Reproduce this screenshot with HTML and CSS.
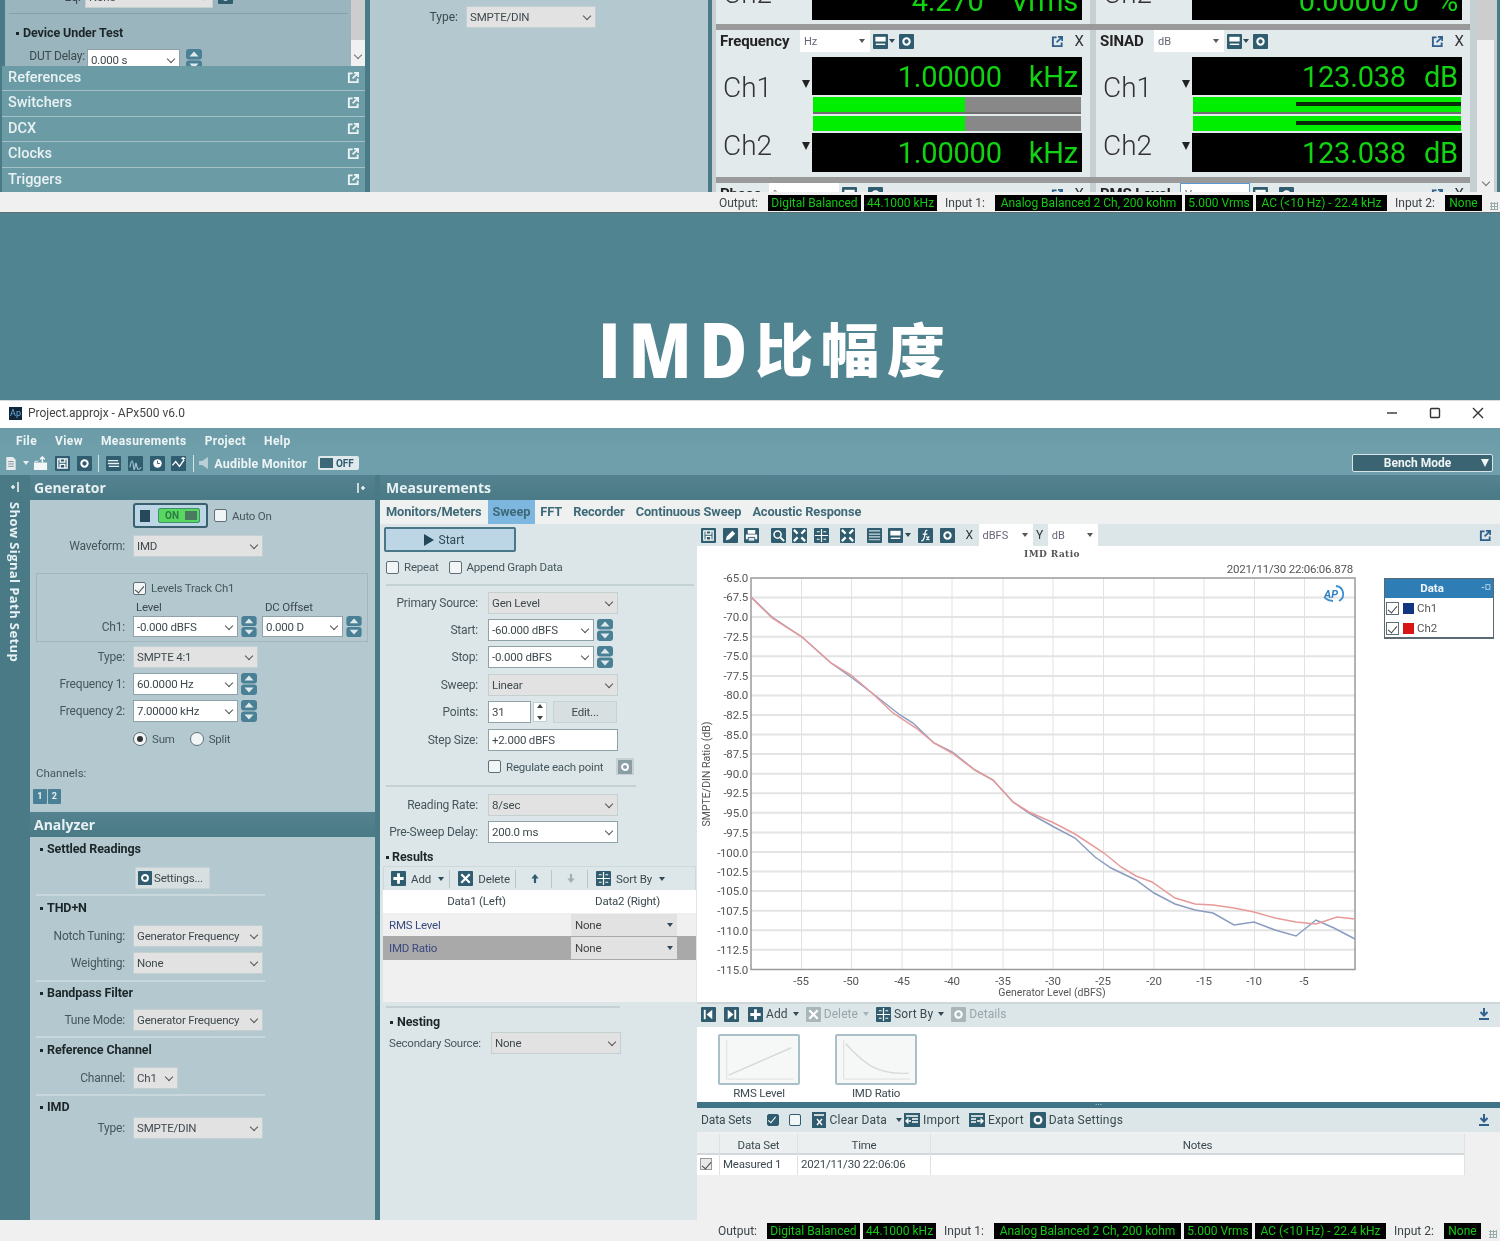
FILE: index.html
```html
<!DOCTYPE html>
<html lang="en">
<head>
    <meta charset="UTF-8">
    <meta name="viewport" content="width=device-width, initial-scale=1.0">
    <title>APx500 IMD Ratio</title>
    <link rel="stylesheet" href="styles.css">
</head>
<body>
    <!-- shared icons -->
    <svg class="sprite" xmlns="http://www.w3.org/2000/svg">
        <symbol id="i-save" viewBox="0 0 16 16"><rect width="16" height="16" rx="1" fill="currentColor"/><path d="M3 3h10v10H3zM5.500 3v3.500h5V3M5.500 13V9h5v4" fill="none" stroke="#fff" stroke-width="1.400"/></symbol>
        <symbol id="i-gear" viewBox="0 0 16 16"><rect width="16" height="16" rx="1" fill="currentColor"/><circle cx="8" cy="8" r="3.400" fill="none" stroke="#fff" stroke-width="2.200"/></symbol>
        <symbol id="i-plus" viewBox="0 0 16 16"><rect width="16" height="16" rx="1" fill="currentColor"/><path d="M8 2.500v11M2.500 8h11" stroke="#fff" stroke-width="3"/></symbol>
        <symbol id="i-x" viewBox="0 0 16 16"><rect width="16" height="16" rx="1" fill="currentColor"/><path d="M3.500 3.500l9 9M12.500 3.500l-9 9" stroke="#fff" stroke-width="2.400"/></symbol>
        <symbol id="i-sort" viewBox="0 0 16 16"><rect width="16" height="16" rx="1" fill="currentColor"/><path d="M8 1v14M1 8h14M3 4h3M10 4h3M3 12h3M10 12h3" stroke="#fff" stroke-width="1.300"/></symbol>
        <symbol id="i-pop" viewBox="0 0 14 14"><path d="M6 2.500H2v9.500h9.500V8" fill="none" stroke="currentColor" stroke-width="2"/><path d="M6 8l5-5M7.500 2h4.500v4.500" fill="none" stroke="currentColor" stroke-width="1.800"/></symbol>
        <symbol id="i-spin" viewBox="0 0 16 22"><rect width="16" height="10.500" y="0" rx="3" fill="#4a8095"/><rect width="16" height="10.500" y="11.500" rx="3" fill="#4a8095"/><path d="M8 2.500l4.500 5h-9zM8 19.500l-4.500-5h9z" fill="#dfe9ec"/></symbol>
        <symbol id="i-open" viewBox="0 0 16 16"><path d="M1 7h14v8H1zM1 7l2-2h4" fill="#f2f6f7"/><path d="M10 1v6M7.500 3.500L10 1l2.500 2.500" stroke="#f2f6f7" stroke-width="1.600" fill="none"/></symbol>
        <symbol id="i-doc" viewBox="0 0 12 16"><path d="M1 1h7l3 3v11H1z" fill="#e7edee"/><path d="M3 6h6M3 8.500h6M3 11h6" stroke="#7f8f94"/></symbol>
        <symbol id="i-swap" viewBox="0 0 16 16"><rect width="16" height="16" rx="1" fill="currentColor"/><path d="M2 5h11M2 8h12M3 11h11" stroke="#e8f0f2" stroke-width="1.400"/></symbol>
        <symbol id="i-wave" viewBox="0 0 16 16"><rect width="16" height="16" rx="1" fill="currentColor"/><path d="M2 12c2-9 3-9 4 0s2-9 3-3 2 7 5 3" fill="none" stroke="#9fc0cc" stroke-width="1.300"/></symbol>
        <symbol id="i-clock" viewBox="0 0 16 16"><rect width="16" height="16" rx="1" fill="currentColor"/><circle cx="8" cy="8" r="4.500" fill="#fff"/><path d="M8 5v3h2.500" stroke="currentColor" fill="none"/></symbol>
        <symbol id="i-trace" viewBox="0 0 16 16"><rect width="16" height="16" rx="1" fill="currentColor"/><path d="M1.500 10l3.500-4 4 5 5-7M11 2.500h4M13 1v3" fill="none" stroke="#fff" stroke-width="1.400"/></symbol>
        <symbol id="i-print" viewBox="0 0 16 16"><rect width="16" height="16" rx="1" fill="currentColor"/><path d="M4 2h8v4H4zM2 7h12v5H2z" fill="#fff"/><path d="M4.500 10h7v4h-7z" fill="#dfe9ec" stroke="currentColor"/></symbol>
        <symbol id="i-edit" viewBox="0 0 16 16"><rect width="16" height="16" rx="1" fill="currentColor"/><path d="M3 13l1-4 6-6 3 3-6 6z" fill="#fff"/></symbol>
        <symbol id="i-zoom" viewBox="0 0 16 16"><rect width="16" height="16" rx="1" fill="currentColor"/><circle cx="7" cy="7" r="3.800" fill="none" stroke="#fff" stroke-width="1.600"/><path d="M10 10l4 4" stroke="#fff" stroke-width="2"/></symbol>
        <symbol id="i-fit" viewBox="0 0 16 16"><rect width="16" height="16" rx="1" fill="currentColor"/><path d="M2 2l4 4M14 2l-4 4M2 14l4-4M14 14l-4-4" stroke="#fff" stroke-width="2.400"/></symbol>
        <symbol id="i-table" viewBox="0 0 16 16"><rect width="16" height="16" rx="1" fill="currentColor"/><path d="M2 3h12M2 6.500h12M2 9.500h12M2 12.500h12" stroke="#cfdde1" stroke-width="1.200"/></symbol>
        <symbol id="i-list" viewBox="0 0 16 16"><rect width="16" height="16" rx="1" fill="currentColor"/><rect x="2.500" y="3" width="11" height="5" fill="#fff"/><path d="M3 11h10" stroke="#fff" stroke-width="1.500"/></symbol>
        <symbol id="i-fx" viewBox="0 0 16 16"><rect width="16" height="16" rx="1" fill="currentColor"/><path d="M10 2.500C7 2 8 5 7 9s-2 5-3.500 4.500M5 6.500h5M9 9l3 4M12 9l-3 4" fill="none" stroke="#fff" stroke-width="1.300"/></symbol>
        <symbol id="i-first" viewBox="0 0 16 16"><rect width="16" height="16" rx="1" fill="currentColor"/><path d="M4 3v10" stroke="#fff" stroke-width="2"/><path d="M12 3v10L6 8z" fill="#fff"/></symbol>
        <symbol id="i-last" viewBox="0 0 16 16"><rect width="16" height="16" rx="1" fill="currentColor"/><path d="M12 3v10" stroke="#fff" stroke-width="2"/><path d="M4 3v10l6-5z" fill="#fff"/></symbol>
        <symbol id="i-clear" viewBox="0 0 16 16"><path d="M1 0h14v16H1z" fill="currentColor"/><path d="M3 3h10M6 7l5 6M11 7l-5 6" stroke="#fff" stroke-width="1.400"/></symbol>
        <symbol id="i-import" viewBox="0 0 16 16"><path d="M0 1h16v14H0z" fill="currentColor"/><path d="M2 4h12M8 7h6M8 10h6M7 9H2M4.500 6.500L2 9l2.500 2.500" stroke="#fff" stroke-width="1.300" fill="none"/></symbol>
        <symbol id="i-export" viewBox="0 0 16 16"><path d="M0 1h16v14H0z" fill="currentColor"/><path d="M2 4h12M2 7h5M2 10h5M8 9h6M11.500 6.500L14 9l-2.500 2.500" stroke="#fff" stroke-width="1.300" fill="none"/></symbol>
        <symbol id="i-down" viewBox="0 0 14 14"><path d="M7 1v6M3.500 5L7 8.500 10.500 5" fill="none" stroke="currentColor" stroke-width="2"/><path d="M2 12h10" stroke="currentColor" stroke-width="2"/></symbol>
        <symbol id="i-up" viewBox="0 0 12 12"><path d="M6 11V5" stroke="currentColor" stroke-width="2.400"/><path d="M6 1l4 5H2z" fill="currentColor"/></symbol>
        <symbol id="i-dn" viewBox="0 0 12 12"><path d="M6 1v6" stroke="currentColor" stroke-width="2.400"/><path d="M6 11L2 6h8z" fill="currentColor"/></symbol>
    </svg>

    <!-- top window, cropped by the photo -->
    <section class="app app-top">
        <div class="top-main">
            <div class="top-left">
                <div class="top-settings">
                    <div class="top-form">
                        <div class="top-eq"><span class="lbl-eq">Eq:</span><div class="sel sel-eq">None</div><svg class="ic"><use href="#i-gear"/></svg></div>
                        <div class="head head-dut">Device Under Test</div>
                        <div class="top-dut"><span class="lbl-dut">DUT Delay:</span><div class="sel combo sel-dut">0.000 s</div><svg class="spin"><use href="#i-spin"/></svg></div>
                    </div>
                    <div class="scroll scroll-left"><span class="thumb"></span><i class="chev"></i></div>
                </div>
                <div class="acc">References<svg class="ic-pop"><use href="#i-pop"/></svg></div>
                <div class="acc">Switchers<svg class="ic-pop"><use href="#i-pop"/></svg></div>
                <div class="acc">DCX<svg class="ic-pop"><use href="#i-pop"/></svg></div>
                <div class="acc">Clocks<svg class="ic-pop"><use href="#i-pop"/></svg></div>
                <div class="acc">Triggers<svg class="ic-pop"><use href="#i-pop"/></svg></div>
            </div>
            <div class="top-center">
                <div class="head">IMD</div>
                <div class="top-type"><span class="lbl-type">Type:</span><div class="sel sel-type">SMPTE/DIN</div></div>
            </div>
            <div class="top-meters">
                <div class="meter-grid">
                    <div class="card card-cut">
                        <div class="mrow mrow-b">
                            <div class="mlabel">Ch2<b class="tri"></b></div>
                            <div class="mright">
                                <div class="bar"></div>
                                <div class="lcd lcd-b"><span>4.270</span><span class="unit">Vrms</span></div>
                            </div>
                        </div>
                    </div>
                    <div class="card card-cut">
                        <div class="mrow mrow-b">
                            <div class="mlabel">Ch2<b class="tri"></b></div>
                            <div class="mright">
                                <div class="bar"></div>
                                <div class="lcd lcd-b"><span>0.000070</span><span class="unit unit-db">%</span></div>
                            </div>
                        </div>
                    </div>

                    <div class="card">
                        <div class="chead"><b class="cname">Frequency</b><div class="csel">Hz<b class="tri-s"></b></div><svg class="ic ic-s"><use href="#i-list"/></svg><b class="tri-s tri-dark"></b><svg class="ic ic-s"><use href="#i-gear"/></svg><svg class="ic-pop ic-blue"><use href="#i-pop"/></svg><span class="cclose">X</span></div>
                        <div class="mrow">
                            <div class="mlabel">Ch1<b class="tri"></b></div>
                            <div class="mright">
                                <div class="lcd"><span>1.00000</span><span class="unit">kHz</span></div>
                                <div class="bar"><span class="fill fill-half"></span></div>
                            </div>
                        </div>
                        <div class="mrow mrow-b">
                            <div class="mlabel">Ch2<b class="tri"></b></div>
                            <div class="mright">
                                <div class="bar"><span class="fill fill-half"></span></div>
                                <div class="lcd lcd-b"><span>1.00000</span><span class="unit">kHz</span></div>
                            </div>
                        </div>
                    </div>
                    <div class="card">
                        <div class="chead"><b class="cname cname-sinad">SINAD</b><div class="csel">dB<b class="tri-s"></b></div><svg class="ic ic-s"><use href="#i-list"/></svg><b class="tri-s tri-dark"></b><svg class="ic ic-s"><use href="#i-gear"/></svg><svg class="ic-pop ic-blue"><use href="#i-pop"/></svg><span class="cclose">X</span></div>
                        <div class="mrow">
                            <div class="mlabel">Ch1<b class="tri"></b></div>
                            <div class="mright">
                                <div class="lcd"><span>123.038</span><span class="unit unit-db">dB</span></div>
                                <div class="bar bar-full"><span class="mark"></span></div>
                            </div>
                        </div>
                        <div class="mrow mrow-b">
                            <div class="mlabel">Ch2<b class="tri"></b></div>
                            <div class="mright">
                                <div class="bar bar-full"><span class="mark"></span></div>
                                <div class="lcd lcd-b"><span>123.038</span><span class="unit unit-db">dB</span></div>
                            </div>
                        </div>
                    </div>

                    <div class="card card-low">
                        <div class="chead"><b class="cname cname-ph">Phase</b><div class="csel">°<b class="tri-s"></b></div><svg class="ic ic-s"><use href="#i-list"/></svg><b class="tri-s tri-dark"></b><svg class="ic ic-s"><use href="#i-gear"/></svg><svg class="ic-pop ic-blue"><use href="#i-pop"/></svg><span class="cclose">X</span></div>
                    </div>
                    <div class="card card-low">
                        <div class="chead"><b class="cname">RMS Level</b><div class="csel csel-focus">Vrms<b class="tri-s"></b></div><svg class="ic ic-s"><use href="#i-list"/></svg><b class="tri-s tri-dark"></b><svg class="ic ic-s"><use href="#i-gear"/></svg><svg class="ic-pop ic-blue"><use href="#i-pop"/></svg><span class="cclose">X</span></div>
                    </div>
                </div>
                <div class="scroll scroll-right"><span class="thumb"></span><i class="chev"></i></div>
            </div>
        </div>
        <div class="status">
            <span>Output:</span><span class="badge b1">Digital Balanced</span><span class="badge b2">44.1000 kHz</span>
            <span class="st-in">Input 1:</span><span class="badge b3">Analog Balanced 2 Ch, 200 kohm</span><span class="badge b4">5.000 Vrms</span><span class="badge b5">AC (&lt;10 Hz) - 22.4 kHz</span>
            <span class="st-in">Input 2:</span><span class="badge b6">None</span><i class="grip"></i>
        </div>
    </section>

    <div class="band">
        <h1 class="band-title"><span class="band-latin">IMD</span><span class="band-cjk">比幅度</span></h1>
    </div>

    <!-- main window -->
    <section class="app app-main">
        <div class="titlebar">
            <span class="logo">Ap</span>
            <span class="title-text">Project.approjx - APx500 v6.0</span>
            <div class="winbtns">
                <svg viewBox="0 0 14 14"><path d="M2 7h10" stroke="#333" stroke-width="1.400"/></svg>
                <svg viewBox="0 0 14 14"><rect x="2.500" y="2.500" width="9" height="9" rx="1" fill="none" stroke="#333" stroke-width="1.400"/></svg>
                <svg viewBox="0 0 14 14"><path d="M2 2l10 10M12 2L2 12" stroke="#333" stroke-width="1.400"/></svg>
            </div>
        </div>
        <nav class="menubar">
            <span>File</span><span>View</span><span>Measurements</span><span>Project</span><span>Help</span>
        </nav>
        <div class="toolbar">
            <svg class="ic-doc"><use href="#i-doc"/></svg><b class="tri-s tri-light"></b>
            <svg class="ic"><use href="#i-open"/></svg>
            <svg class="ic"><use href="#i-save"/></svg>
            <svg class="ic"><use href="#i-gear"/></svg>
            <i class="vsep"></i>
            <svg class="ic"><use href="#i-swap"/></svg>
            <svg class="ic"><use href="#i-wave"/></svg>
            <svg class="ic"><use href="#i-clock"/></svg>
            <svg class="ic"><use href="#i-trace"/></svg>
            <i class="vsep"></i>
            <svg class="ic-spk" viewBox="0 0 12 14"><path d="M1 5l3 0v4H1zM4 5l6-4v12L4 9z" fill="#b9d0d6"/></svg>
            <span class="am-text">Audible Monitor</span>
            <span class="off"><i></i>OFF</span>
            <div class="bench">Bench Mode<b class="bench-tri"></b></div>
        </div>

        <div class="body">
            <aside class="rail">
                <svg class="pin" viewBox="0 0 12 12"><path d="M9 1v10" stroke="#e8f0f2" stroke-width="1.600"/><path d="M2 6h4M4 4v4" stroke="#e8f0f2" stroke-width="1.600"/></svg>
                <span class="rail-text">Show Signal Path Setup</span>
            </aside>

            <div class="side">
                <div class="bar-head">Generator<svg class="pin pin-r" viewBox="0 0 12 12"><path d="M3 1v10" stroke="#e8f0f2" stroke-width="1.600"/><path d="M6 6h4M8 4v4" stroke="#e8f0f2" stroke-width="1.600"/></svg></div>
                <div class="panel panel-gen">
                    <div class="row row-on">
                        <div class="onbtn"><i class="onstop"></i><span class="onpill">ON<i></i></span></div>
                        <span class="cb"></span><span class="cb-text">Auto On</span>
                    </div>
                    <div class="row mt7"><label class="lbl">Waveform:</label><div class="sel w130">IMD</div></div>
                    <div class="groupbox">
                        <div class="gb-check"><span class="cb on"></span><span class="cb-text">Levels Track Ch1</span></div>
                        <div class="gb-labels"><span class="gb-level">Level</span><span>DC Offset</span></div>
                        <div class="row gb-row">
                            <label class="lbl lbl-gb">Ch1:</label>
                            <div class="sel combo w105">-0.000 dBFS</div><svg class="spin"><use href="#i-spin"/></svg>
                            <div class="sel combo w81 ml5">0.000 D</div><svg class="spin"><use href="#i-spin"/></svg>
                        </div>
                    </div>
                    <div class="row mt4"><label class="lbl">Type:</label><div class="sel w125">SMPTE 4:1</div></div>
                    <div class="row mt5"><label class="lbl">Frequency 1:</label><div class="sel combo w105">60.0000 Hz</div><svg class="spin"><use href="#i-spin"/></svg></div>
                    <div class="row mt5"><label class="lbl">Frequency 2:</label><div class="sel combo w105">7.00000 kHz</div><svg class="spin"><use href="#i-spin"/></svg></div>
                    <div class="radios">
                        <span class="rd on"></span><span class="cb-text">Sum</span>
                        <span class="rd rd-2"></span><span class="cb-text">Split</span>
                    </div>
                    <div class="channels">Channels:</div>
                    <div class="chbtns"><span>1</span><span>2</span></div>
                </div>

                <div class="bar-head">Analyzer</div>
                <div class="panel panel-ana">
                    <div class="head">Settled Readings</div>
                    <div class="row settings-row"><button class="btn btn-set" type="button"><svg class="ic ic-m"><use href="#i-gear"/></svg>Settings...</button></div>
                    <hr class="rule">
                    <div class="head">THD+N</div>
                    <div class="row mt10"><label class="lbl">Notch Tuning:</label><div class="sel w130">Generator Frequency</div></div>
                    <div class="row mt5"><label class="lbl">Weighting:</label><div class="sel w130">None</div></div>
                    <hr class="rule rule-6">
                    <div class="head head-tight">Bandpass Filter</div>
                    <div class="row mt9"><label class="lbl">Tune Mode:</label><div class="sel w130">Generator Frequency</div></div>
                    <hr class="rule">
                    <div class="head">Reference Channel</div>
                    <div class="row mt10"><label class="lbl">Channel:</label><div class="sel w45">Ch1</div></div>
                    <hr class="rule">
                    <div class="head head-tight">IMD</div>
                    <div class="row mt3"><label class="lbl">Type:</label><div class="sel w130">SMPTE/DIN</div></div>
                </div>
            </div>

            <div class="divider"></div>

            <main class="measure">
                <div class="bar-head bar-head-m">Measurements</div>
                <div class="tabs">
                    <span>Monitors/Meters</span><span class="tab-on">Sweep</span><span>FFT</span><span>Recorder</span><span>Continuous Sweep</span><span>Acoustic Response</span>
                </div>
                <div class="split">
                    <div class="mid">
                        <button class="btn-start" type="button"><b class="play"></b>Start</button>
                        <div class="checks">
                            <span class="cb"></span><span class="cb-text">Repeat</span>
                            <span class="cb cb-2"></span><span class="cb-text">Append Graph Data</span>
                        </div>
                        <hr class="rule rule-mid">
                        <div class="row mr mt6"><label class="lbl">Primary Source:</label><div class="sel w130">Gen Level</div></div>
                        <div class="row mr mt5"><label class="lbl">Start:</label><div class="sel combo w106">-60.000 dBFS</div><svg class="spin"><use href="#i-spin"/></svg></div>
                        <div class="row mr mt5"><label class="lbl">Stop:</label><div class="sel combo w106">-0.000 dBFS</div><svg class="spin"><use href="#i-spin"/></svg></div>
                        <div class="row mr mt6"><label class="lbl">Sweep:</label><div class="sel w130">Linear</div></div>
                        <div class="row mr mt5"><label class="lbl">Points:</label><div class="inp w43">31</div><span class="stepper"></span><button class="btn btn-edit" type="button">Edit...</button></div>
                        <div class="row mr mt6"><label class="lbl">Step Size:</label><div class="inp w130">+2.000 dBFS</div></div>
                        <div class="row mr regulate"><span class="cb"></span><span class="cb-text">Regulate each point</span><span class="gear-off"><svg class="ic ic-m"><use href="#i-gear"/></svg></span></div>
                        <hr class="rule rule-rate">
                        <div class="row mr mt7"><label class="lbl">Reading Rate:</label><div class="sel w130">8/sec</div></div>
                        <div class="row mr mt5"><label class="lbl">Pre-Sweep Delay:</label><div class="sel combo w130">200.0 ms</div></div>
                        <div class="head head-results">Results</div>
                        <div class="results">
                            <div class="res-tools">
                                <svg class="ic"><use href="#i-plus"/></svg><span>Add</span><b class="tri-s tri-dark"></b><i class="tsep"></i>
                                <svg class="ic"><use href="#i-x"/></svg><span>Delete</span><i class="tsep"></i>
                                <svg class="arrow"><use href="#i-up"/></svg><i class="tsep"></i><svg class="arrow arrow-off"><use href="#i-dn"/></svg><i class="tsep"></i>
                                <svg class="ic"><use href="#i-sort"/></svg><span>Sort By</span><b class="tri-s tri-dark"></b>
                            </div>
                            <div class="res-head"><span>Data1 (Left)</span><span>Data2 (Right)</span></div>
                            <div class="res-row"><span class="res-name">RMS Level</span><div class="res-sel">None<b class="tri-s tri-dark"></b></div></div>
                            <div class="res-row res-row-on"><span class="res-name">IMD Ratio</span><div class="res-sel">None<b class="tri-s tri-dark"></b></div></div>
                            <div class="res-empty"></div>
                        </div>
                        <hr class="rule rule-nest">
                        <div class="head head-nest">Nesting</div>
                        <div class="row nest-row"><label class="lbl-nest">Secondary Source:</label><div class="sel w130">None</div></div>
                    </div>

                    <div class="right">
                        <div class="graph-tools">
                            <svg class="ic"><use href="#i-save"/></svg>
                            <svg class="ic"><use href="#i-edit"/></svg>
                            <svg class="ic"><use href="#i-print"/></svg>
                            <svg class="ic gap"><use href="#i-zoom"/></svg>
                            <svg class="ic"><use href="#i-fit"/></svg>
                            <svg class="ic"><use href="#i-sort"/></svg>
                            <svg class="ic gap"><use href="#i-fit"/></svg>
                            <svg class="ic gap"><use href="#i-table"/></svg>
                            <svg class="ic"><use href="#i-list"/></svg><b class="tri-s tri-dark"></b>
                            <svg class="ic"><use href="#i-fx"/></svg>
                            <svg class="ic"><use href="#i-gear"/></svg>
                            <span class="axis-x">X</span><div class="csel csel-x">dBFS<b class="tri-s"></b></div>
                            <span class="axis-y">Y</span><div class="csel csel-y">dB<b class="tri-s"></b></div>
                            <svg class="ic-pop ic-blue pop-end"><use href="#i-pop"/></svg>
                        </div>
                        <div class="graph">
                            <svg class="plot" viewBox="697 546 803 456" xmlns="http://www.w3.org/2000/svg">
                                <text class="plot-title" x="1052" y="557" text-anchor="middle">IMD Ratio</text>
                                <text class="plot-time" x="1353" y="573" text-anchor="end">2021/11/30 22:06:06.878</text>
                                <path class="grid-h" d="M751 597.600H1355M751 617.100H1355M751 636.700H1355M751 656.300H1355M751 675.900H1355M751 695.400H1355M751 715H1355M751 734.600H1355M751 754.100H1355M751 773.700H1355M751 793.300H1355M751 812.800H1355M751 832.400H1355M751 852H1355M751 871.600H1355M751 891.100H1355M751 910.700H1355M751 930.300H1355M751 949.800H1355"/>
                                <path class="grid-v" d="M801.500 578V969M851.500 578V969M902 578V969M952 578V969M1003 578V969M1053 578V969M1103.500 578V969M1154 578V969M1204 578V969M1254.500 578V969M1304.500 578V969"/>
                                <rect class="plot-frame" x="751" y="578" width="604" height="391.500"/>
                                <g class="ticks-y" text-anchor="end">
                                    <text x="748" y="582">-65.0</text><text x="748" y="601">-67.5</text><text x="748" y="621">-70.0</text><text x="748" y="641">-72.5</text><text x="748" y="660">-75.0</text><text x="748" y="680">-77.5</text><text x="748" y="699">-80.0</text><text x="748" y="719">-82.5</text><text x="748" y="739">-85.0</text><text x="748" y="758">-87.5</text><text x="748" y="778">-90.0</text><text x="748" y="797">-92.5</text><text x="748" y="817">-95.0</text><text x="748" y="837">-97.5</text><text x="748" y="857">-100.0</text><text x="748" y="876">-102.5</text><text x="748" y="895">-105.0</text><text x="748" y="915">-107.5</text><text x="748" y="935">-110.0</text><text x="748" y="954">-112.5</text><text x="748" y="974">-115.0</text>
                                </g>
                                <g class="ticks-x" text-anchor="middle">
                                    <text x="801" y="985">-55</text><text x="851" y="985">-50</text><text x="902" y="985">-45</text><text x="952" y="985">-40</text><text x="1003" y="985">-35</text><text x="1053" y="985">-30</text><text x="1103" y="985">-25</text><text x="1154" y="985">-20</text><text x="1204" y="985">-15</text><text x="1254" y="985">-10</text><text x="1304" y="985">-5</text>
                                </g>
                                <text class="axis-title" x="1052" y="996" text-anchor="middle">Generator Level (dBFS)</text>
                                <text class="axis-title" transform="translate(710 774) rotate(-90)" text-anchor="middle">SMPTE/DIN Ratio (dB)</text>
                                <polyline class="trace trace-b" points="751,597 772,617 802,637 831,663 851,677 872,693 900,715 913,723 934,743 952,752 975,770 993,780 1013,802 1029,813 1054,827 1075,838 1095,857 1111,868 1136,880 1154,893 1175,904 1195,910 1213,913 1234,925 1254,922 1275,930 1296,936 1316,920 1334,928 1355,939"/>
                                <polyline class="trace trace-r" points="751,597 772,618 802,637 831,663 851,675 872,693 893,713 916,728 934,743 952,753 975,770 993,780 1013,802 1029,812 1054,823 1075,834 1104,853 1121,867 1136,876 1152,882 1175,898 1195,904 1213,905 1234,908 1254,912 1275,918 1296,922 1316,924 1337,917 1355,919"/>
                                <g class="ap-logo"><path d="M1336 586a8 8 0 0 1 3 15M1339 587a7 7 0 0 1 4 6M1325 598a11 7 0 0 0 8 3"/><text x="1324" y="598">AP</text></g>
                            </svg>
                            <div class="legend">
                                <div class="legend-head">Data<i>-¤</i></div>
                                <div class="legend-row"><span class="cb on cb-sq"></span><i class="swatch sw-blue"></i>Ch1</div>
                                <div class="legend-row"><span class="cb on cb-sq"></span><i class="swatch sw-red"></i>Ch2</div>
                            </div>
                        </div>
                        <div class="strip">
                            <svg class="ic"><use href="#i-first"/></svg>
                            <svg class="ic"><use href="#i-last"/></svg>
                            <svg class="ic gap-s"><use href="#i-plus"/></svg><span>Add</span><b class="tri-s tri-dark"></b>
                            <svg class="ic ic-off"><use href="#i-x"/></svg><span class="txt-off">Delete</span><b class="tri-s tri-off"></b>
                            <svg class="ic"><use href="#i-sort"/></svg><span>Sort By</span><b class="tri-s tri-dark"></b>
                            <svg class="ic ic-off"><use href="#i-gear"/></svg><span class="txt-off">Details</span>
                            <svg class="ic-dl"><use href="#i-down"/></svg>
                        </div>
                        <div class="thumbs">
                            <figure class="thumb-item">
                                <svg class="mini" viewBox="0 0 78 48"><path d="M6 4v40h68" fill="none" stroke="#ddd"/><path d="M8 40L72 12" fill="none" stroke="#d4dadc" stroke-width="1.500"/></svg>
                                <figcaption>RMS Level</figcaption>
                            </figure>
                            <figure class="thumb-item">
                                <svg class="mini" viewBox="0 0 78 48"><path d="M6 4v40h68" fill="none" stroke="#ddd"/><path d="M8 8C24 24 36 40 72 38" fill="none" stroke="#d4dadc" stroke-width="1.500"/></svg>
                                <figcaption>IMD Ratio</figcaption>
                            </figure>
                        </div>
                        <div class="splitter">...</div>
                        <div class="strip strip-data">
                            <span class="ds-name">Data Sets</span>
                            <span class="dchk dchk-on"></span><span class="dchk"></span>
                            <svg class="ic"><use href="#i-clear"/></svg><span>Clear Data</span><b class="tri-s tri-dark"></b>
                            <svg class="ic"><use href="#i-import"/></svg><span>Import</span>
                            <svg class="ic gap-m"><use href="#i-export"/></svg><span>Export</span>
                            <svg class="ic gap-g"><use href="#i-gear"/></svg><span>Data Settings</span>
                            <svg class="ic-dl"><use href="#i-down"/></svg>
                        </div>
                        <div class="dsets">
                            <div class="ds-row ds-head"><span></span><span>Data Set</span><span>Time</span><span>Notes</span></div>
                            <div class="ds-row ds-body"><span><i class="cb on cb-small"></i></span><span>Measured 1</span><span>2021/11/30 22:06:06</span><span></span></div>
                        </div>
                    </div>
                </div>
            </main>
        </div>

        <div class="status">
            <span>Output:</span><span class="badge b1">Digital Balanced</span><span class="badge b2">44.1000 kHz</span>
            <span class="st-in">Input 1:</span><span class="badge b3">Analog Balanced 2 Ch, 200 kohm</span><span class="badge b4">5.000 Vrms</span><span class="badge b5">AC (&lt;10 Hz) - 22.4 kHz</span>
            <span class="st-in">Input 2:</span><span class="badge b6">None</span><i class="grip"></i>
        </div>
    </section>
</body>
</html>
```

FILE: styles.css
```css
* {
    margin: 0;
    padding: 0;
    box-sizing: border-box;
}

html, body {
    width: 1500px;
    height: 1241px;
    overflow: hidden;
}

body {
    background: #4f8490;
    font-family: Roboto, "Noto Sans CJK SC", sans-serif;
    font-size: 12px;
    color: #3c4a50;
}

.sprite {
    display: none;
}

.app {
    filter: blur(0.35px);
    background: #f0f0f0;
}

/* ---------- top window ---------- */
.app-top {
    height: 213px;
    display: flex;
    flex-direction: column;
    border-bottom: 1px solid #5d6f75;
    overflow: hidden;
}

.top-main {
    height: 193px;
    display: flex;
    overflow: hidden;
}

.top-left {
    width: 370px;
    height: 193px;
    background: #4a7a86;
    padding: 0 5px 0 2px;
    display: flex;
    flex-direction: column;
    justify-content: flex-end;
    flex-shrink: 0;
}

.top-settings {
    height: 66px;
    display: flex;
    flex-shrink: 0;
    background: #9ab5bd;
    margin-left: 3px;
}

.top-form {
    flex: 1;
    height: 66px;
    display: flex;
    flex-direction: column;
    justify-content: flex-end;
    overflow: hidden;
}

.top-eq {
    margin-left: 4px;
    margin-right: 2px;
    padding-bottom: 5px;
    border-bottom: 1px solid #84a0a8;
    height: 30px;
    display: flex;
    align-items: flex-end;
    flex-shrink: 0;
}

.top-eq .ic {
    margin-bottom: 4px;
}

.lbl-eq {
    width: 76px;
    text-align: right;
    padding: 0 4px 4px 0;
}

.sel-eq {
    width: 128px;
    margin-right: 5px;
}

.head-dut {
    margin: 12px 0 0 10px;
    font-size: 11px;
    height: 15px;
    flex-shrink: 0;
}

.top-dut {
    height: 17px;
    margin-top: 9px;
    display: flex;
    overflow: hidden;
    flex-shrink: 0;
    letter-spacing: -0.2px;
}

.lbl-dut {
    width: 82px;
    text-align: right;
    padding-right: 2px;
}

.sel-dut {
    width: 93px;
    margin-right: 3px;
}

.top-dut .sel,
.top-dut .spin {
    height: 22px;
}

.scroll {
    width: 14px;
    background: #f0f0f0;
    display: flex;
    flex-direction: column;
    justify-content: space-between;
    align-items: center;
    flex-shrink: 0;
}

.thumb {
    display: block;
    width: 100%;
    height: 40px;
    background: #cdcdcd;
}

.chev {
    width: 6px;
    height: 6px;
    margin-bottom: 8px;
    border-right: 1px solid #707070;
    border-bottom: 1px solid #707070;
    transform: rotate(45deg);
}

.scroll-left {
    margin-left: 1px;
}

.acc {
    height: 24.400px;
    margin-bottom: 1px;
    flex-shrink: 0;
    background: #6b9ca6;
    box-shadow: 0 1px 0 #a4c0c6;
    padding: 0 5px 2px 6px;
    color: #e8f1f3;
    font-size: 14.500px;
    font-weight: 500;
    display: flex;
    align-items: center;
    justify-content: space-between;
}

.acc:last-child {
    height: 25.400px;
    margin-bottom: 0;
    box-shadow: none;
}

.ic-pop {
    width: 13px;
    height: 13px;
    color: #eef4f5;
    flex-shrink: 0;
}

.ic-blue {
    color: #2f5f8c;
}

.top-center {
    width: 338px;
    height: 193px;
    flex-shrink: 0;
    background: #b4c9cf;
    display: flex;
    flex-direction: column;
    justify-content: flex-end;
    padding-bottom: 167px;
    padding-left: 5px;
}

.top-center .head {
    flex-shrink: 0;
}

.top-type {
    display: flex;
    align-items: center;
    height: 19px;
    margin-top: 5px;
    flex-shrink: 0;
}

.lbl-type {
    width: 83px;
    text-align: right;
    padding-right: 0;
}

.sel-type {
    width: 130px;
    height: 19px;
    margin-left: 8px;
}

.top-meters {
    flex: 1;
    display: flex;
    border-left: 4px solid #4a7a86;
    border-right: 3px solid #4a7a86;
    background: #c6d0d3;
    padding-left: 4px;
    justify-content: space-between;
}

.meter-grid {
    display: grid;
    grid-template-columns: 374px 374px;
    grid-template-rows: 24px 147px 10px;
    gap: 6px 6px;
    height: 193px;
    width: 754px;
    background: linear-gradient(#9a9a9a, #9a9a9a) 0 24px / 100% 6px no-repeat,
                linear-gradient(#9a9a9a, #9a9a9a) 0 177px / 100% 6px no-repeat;
}

.card {
    background: #e3eaec;
    overflow: hidden;
}

.card-cut {
    display: flex;
    flex-direction: column;
    justify-content: flex-end;
}

.chead {
    height: 22px;
    display: flex;
    align-items: center;
    padding-left: 4px;
    font-size: 14px;
    color: #222;
}

.cname {
    font-weight: 700;
    font-size: 15px;
    width: 80px;
    letter-spacing: -0.1px;
    white-space: nowrap;
    flex-shrink: 0;
}

.cname-sinad {
    width: 54px;
}

.cname-ph {
    width: 49px;
}

.csel {
    width: 70px;
    height: 22px;
    background: #fff;
    font-size: 11px;
    color: #667;
    display: flex;
    align-items: center;
    justify-content: space-between;
    padding: 0 5px 0 4px;
    margin-right: 0;
    flex-shrink: 0;
}

.csel-focus {
    border: 1px solid #5b9bd5;
}

.tri-s {
    width: 0;
    height: 0;
    border: 3px solid transparent;
    border-top: 4px solid #555;
    border-bottom: 0;
    display: inline-block;
    flex-shrink: 0;
}

.tri-dark {
    border-top-color: #2f4a55;
    margin: 0 4px 0 2px;
}

.chead .tri-dark {
    margin: 0 1px 0 1px;
}

.tri-light {
    border-top-color: #e6eef0;
    margin: 0 0 0 3px;
}

.tri-off {
    border-top-color: #a5b2b6;
    margin: 0 4px 0 2px;
}

.ic {
    width: 15px;
    height: 15px;
    color: #2f5c6e;
    flex-shrink: 0;
    display: block;
}

.ic-s {
    width: 15px;
    height: 15px;
    margin-left: 3px;
}

.ic-m {
    width: 14px;
    height: 14px;
}

.ic-off {
    color: #a8b6ba;
}

.chead .ic-pop {
    margin-left: auto;
}

.cclose {
    margin: 0 6px 0 11px;
    font-size: 15px;
    color: #333;
}

.mrow {
    height: 60px;
    display: grid;
    grid-template-columns: 96px 270px;
    margin-bottom: 4px;
}

.mrow-b {
    margin-bottom: 5px;
    height: 56px;
}

.card-cut .mrow-b {
    margin-bottom: 4px;
    flex-shrink: 0;
}

.mlabel {
    position: relative;
    padding-left: 7px;
    display: flex;
    align-items: center;
    font-size: 28px;
    font-weight: 300;
    color: #333;
    border-right: 0;
}

.mrow .mlabel {
    padding-top: 10px;
}

.mrow-b .mlabel {
    padding-top: 2px;
}

.tri {
    position: absolute;
    right: 2px;
    top: 50%;
    margin-top: -2px;
    border: 4px solid transparent;
    border-top: 8px solid #222;
    border-bottom: 0;
}

.mright {
    display: flex;
    flex-direction: column;
    gap: 2px;
    padding-top: 5px;
}

.mrow-b .mright {
    padding-top: 0;
}

.lcd {
    height: 38px;
    background: #000;
    color: #12d312;
    font-family: Roboto, sans-serif;
    font-size: 29px;
    font-weight: 400;
    letter-spacing: -0.2px;
    line-height: 1;
    display: flex;
    align-items: center;
    justify-content: flex-end;
    padding: 3px 4px 0 0;
}

.lcd-b {
    height: 39px;
    padding-top: 2px;
}

.unit {
    margin-left: 27px;
}

.unit-db {
    margin-left: 18px;
}

.bar {
    position: relative;
    height: 15px;
    margin: 0 1px;
    background: #888;
}

.lcd + .bar {
    box-shadow: 0 2px 0 #6f6f6f;
}

.bar-full {
    background: #00ee00;
}

.fill {
    display: block;
    height: 100%;
    background: #00ee00;
}

.fill-half {
    width: 152px;
}

.mark {
    position: absolute;
    left: 103px;
    right: 0;
    top: 5px;
    height: 4px;
    background: #0a2a0a;
}

.card-low {
    height: 10px;
}

.scroll-right {
    width: 17px;
    height: 193px;
    margin-right: 3px;
}

/* ---------- status bar ---------- */
.status {
    height: 20px;
    flex-shrink: 0;
    display: flex;
    align-items: center;
    padding-left: 719px;
    padding-top: 1px;
    background: #f0f0f0;
    font-size: 12px;
    color: #3b4448;
    white-space: nowrap;
}

.status > span:first-child {
    width: 49px;
}

.st-in {
    width: 50px;
    margin-left: 8px;
}

.badge {
    height: 16px;
    line-height: 16px;
    background: #000;
    color: #14c814;
    text-align: center;
    margin-right: 3px;
    overflow: hidden;
}

.b1 { width: 93px; }
.b2 { width: 73px; margin-right: 0; }
.b3 { width: 187px; }
.b4 { width: 68px; }
.b5 { width: 131px; margin-right: 0; }
.b6 { width: 37px; margin-right: 0; }

.grip {
    width: 8px;
    height: 8px;
    margin: 6px 0 0 8px;
    background: radial-gradient(#9aa 1px, transparent 1.200px) 0 0 / 3px 3px;
}

/* ---------- band ---------- */
.band {
    height: 187px;
    padding: 98px 0 0 598px;
}

.band-title {
    display: flex;
    align-items: center;
    height: 76px;
    color: #fff;
}

.band-latin {
    display: inline-block;
    width: 157px;
    font-family: "Open Sans", sans-serif;
    font-weight: 800;
    font-size: 77px;
    line-height: 76px;
    letter-spacing: 9px;
    transform: scaleX(0.85);
    transform-origin: left center;
    flex-shrink: 0;
}

.band-cjk {
    font-family: "Noto Sans CJK SC", sans-serif;
    font-weight: 900;
    font-size: 58px;
    line-height: 76px;
    letter-spacing: 8px;
    white-space: nowrap;
    margin-top: -4px;
}

/* ---------- main window ---------- */
.app-main {
    height: 841px;
    display: flex;
    flex-direction: column;
}

.titlebar {
    height: 28px;
    background: #fff;
    display: flex;
    align-items: center;
    padding: 0 0 3px 9px;
    font-size: 12px;
    color: #444;
    flex-shrink: 0;
    border-top: 1px solid #d6dcde;
}

.logo {
    width: 13px;
    height: 13px;
    background: #12263a;
    color: #6ab0e0;
    font-size: 9px;
    line-height: 13px;
    text-align: center;
    margin-right: 6px;
}

.winbtns {
    margin-left: auto;
    display: flex;
    gap: 29px;
    padding-right: 15px;
}

.winbtns svg {
    width: 14px;
    height: 14px;
}

.menubar {
    height: 24px;
    flex-shrink: 0;
    background: linear-gradient(#6a9ba7, #6f9fab);
    display: flex;
    align-items: center;
    gap: 18px;
    padding: 1px 0 0 16px;
    color: #eef4f5;
    font-weight: 700;
    font-size: 12px;
    letter-spacing: 0.4px;
}

.toolbar {
    height: 23px;
    flex-shrink: 0;
    background: #6f9fab;
    display: flex;
    align-items: center;
    gap: 6.700px;
    padding: 0 0 1px 5px;
}

.ic-doc {
    width: 12px;
    height: 15px;
}

.toolbar .tri-light {
    margin: 0 -2px 0 -1px;
}

.vsep {
    width: 1px;
    height: 17px;
    background: #d5e3e6;
}

.ic-spk {
    width: 12px;
    height: 14px;
    margin-left: -3px;
}

.am-text {
    color: #eef4f5;
    font-weight: 700;
    font-size: 12.500px;
    letter-spacing: 0.2px;
    margin-left: -2px;
    width: 96px;
    white-space: nowrap;
}

.off {
    width: 41px;
    height: 14px;
    background: #dfe9ec;
    border-radius: 2px;
    color: #2f5c6e;
    font-size: 10px;
    font-weight: 700;
    display: flex;
    align-items: center;
    gap: 3px;
    margin-left: 1px;
    padding-left: 2px;
}

.off i {
    width: 13px;
    height: 10px;
    background: #3c6878;
}

.bench {
    position: relative;
    margin-left: auto;
    margin-right: 7px;
    width: 141px;
    height: 18px;
    border: 1px solid #d7e5e8;
    border-radius: 2px;
    background: #3a6472;
    color: #eef4f5;
    font-weight: 700;
    font-size: 12px;
    text-align: center;
    line-height: 16px;
    padding-right: 10px;
}

.bench-tri {
    position: absolute;
    right: 3px;
    top: 4px;
    border: 4px solid transparent;
    border-top: 8px solid #f0f5f6;
    border-bottom: 0;
}

.body {
    height: 745px;
    display: grid;
    grid-template-columns: 30px 345px 5px 1fr;
    background: #4a7a86;
    flex-shrink: 0;
}

.rail {
    display: flex;
    flex-direction: column;
    align-items: center;
    padding-top: 6px;
}

.pin {
    width: 12px;
    height: 12px;
    flex-shrink: 0;
}

.rail-text {
    writing-mode: vertical-rl;
    margin-top: 9px;
    color: #e8f1f3;
    font-family: "Open Sans", sans-serif;
    font-weight: 700;
    font-size: 13px;
    letter-spacing: 0.4px;
    white-space: nowrap;
}

.side {
    display: flex;
    flex-direction: column;
}

.bar-head {
    height: 25px;
    flex-shrink: 0;
    background: linear-gradient(#558290, #4a7a86);
    color: #e8f1f3;
    font-family: "Open Sans", sans-serif;
    font-weight: 700;
    font-size: 14px;
    line-height: 25px;
    padding-left: 4px;
    display: flex;
    align-items: center;
    justify-content: space-between;
    padding-right: 8px;
}

.bar-head-m {
    padding-left: 6px;
    justify-content: flex-start;
}

.panel {
    background: #b4c9cf;
    overflow: hidden;
    padding-left: 6px;
}

.panel-gen {
    height: 312px;
    padding-top: 3px;
}

.panel-ana {
    height: 383px;
    padding-top: 5px;
}

.row {
    display: flex;
    align-items: center;
    height: 22px;
}

.mt3 { margin-top: 3px; }
.mt4 { margin-top: 4px; }
.mt5 { margin-top: 5px; }
.mt6 { margin-top: 6px; }
.mt7 { margin-top: 7px; }
.mt9 { margin-top: 9px; }
.mt10 { margin-top: 10px; }
.ml5 { margin-left: 5px; }

.row-on {
    height: 25px;
    padding-left: 97px;
}

.lbl {
    width: 89px;
    text-align: right;
    padding-right: 0;
    margin-right: 8px;
    color: #46565c;
    white-space: nowrap;
    flex-shrink: 0;
    letter-spacing: -0.2px;
}

.sel,
.inp {
    height: 22px;
    line-height: 20px;
    padding-left: 3px;
    border: 1px solid #c4cfd2;
    background: #e2e2e2;
    color: #3f4a4e;
    font-size: 11.500px;
    letter-spacing: -0.2px;
    white-space: nowrap;
    position: relative;
    flex-shrink: 0;
}

.sel::after {
    content: "";
    position: absolute;
    right: 5px;
    top: 6px;
    width: 5px;
    height: 5px;
    border-right: 1px solid #555;
    border-bottom: 1px solid #555;
    transform: rotate(45deg);
}

.combo,
.inp {
    background: #fff;
    border: 1px solid #8fa2a8;
}

.w43 { width: 43px; }
.w45 { width: 45px; }
.w81 { width: 81px; }
.w105 { width: 105px; }
.w106 { width: 106px; }
.w125 { width: 125px; }
.w130 { width: 130px; }

.spin {
    width: 16px;
    height: 22px;
    margin-left: 3px;
    flex-shrink: 0;
}

.onbtn {
    width: 75px;
    height: 25px;
    background: #bcd6e6;
    border: 2px solid #3a6070;
    border-radius: 3px;
    display: flex;
    align-items: center;
    padding-left: 5px;
    margin-right: 6px;
}

.onstop {
    width: 10px;
    height: 12px;
    background: #27485a;
    margin-right: 8px;
}

.onpill {
    width: 42px;
    height: 15px;
    background: #58d860;
    border: 1px solid #3f8f6a;
    border-radius: 2px;
    color: #2d7a45;
    font-size: 10px;
    font-weight: 700;
    padding-left: 6px;
    display: flex;
    align-items: center;
    justify-content: space-between;
    padding-right: 2px;
}

.onpill i {
    width: 12px;
    height: 9px;
    background: #4a7a60;
}

.cb {
    width: 13px;
    height: 13px;
    border: 1px solid #5f6f75;
    border-radius: 2px;
    background: #f2f5f6;
    position: relative;
    flex-shrink: 0;
    display: inline-block;
}

.cb.on::after {
    content: "";
    position: absolute;
    left: 3px;
    top: 1px;
    width: 4px;
    height: 8px;
    border-right: 1.400px solid #444;
    border-bottom: 1.400px solid #444;
    transform: rotate(40deg);
}

.cb-text {
    margin-left: 5px;
    font-size: 11.500px;
    letter-spacing: -0.2px;
    color: #46565c;
    white-space: nowrap;
}

.groupbox {
    margin-top: 16px;
    width: 332px;
    height: 69px;
    border: 1px solid #a2b6bc;
    padding-top: 7px;
}

.gb-check {
    display: flex;
    align-items: center;
    height: 14px;
    padding-left: 96px;
}

.gb-labels {
    display: flex;
    height: 14px;
    margin-top: 5px;
    padding-left: 99px;
    font-size: 11.500px;
    letter-spacing: -0.2px;
    line-height: 14px;
}

.gb-level {
    width: 129px;
}

.gb-row {
    height: 21px;
    margin-top: 2px;
}

.gb-row .sel,
.gb-row .spin {
    height: 21px;
}

.lbl-gb {
    width: 88px;
}

.radios {
    display: flex;
    align-items: center;
    height: 14px;
    margin-top: 10px;
    padding-left: 97px;
}

.rd {
    width: 14px;
    height: 14px;
    border-radius: 50%;
    border: 1px solid #5f6f75;
    background: #f2f5f6;
    position: relative;
    flex-shrink: 0;
}

.rd.on::after {
    content: "";
    position: absolute;
    left: 3px;
    top: 3px;
    width: 6px;
    height: 6px;
    border-radius: 50%;
    background: #333;
}

.rd-2 {
    margin-left: 15px;
}

.channels {
    margin-top: 20px;
    height: 14px;
    line-height: 14px;
    font-size: 11.500px;
    color: #46565c;
}

.chbtns {
    display: flex;
    margin: 9px 0 0 -3px;
    width: 28px;
    height: 15px;
    gap: 1px;
}

.chbtns span {
    flex: 1;
    background: #4a8095;
    color: #e8f1f3;
    font-size: 9px;
    font-weight: 700;
    text-align: center;
    line-height: 15px;
    border-radius: 1px;
}

.head {
    height: 14px;
    line-height: 14px;
    padding-left: 11px;
    position: relative;
    font-size: 12.500px;
    font-weight: 700;
    color: #1c2629;
    letter-spacing: -0.1px;
}

.head::before {
    content: "";
    position: absolute;
    left: 4px;
    top: 6px;
    width: 3px;
    height: 3px;
    background: #1c2629;
}

.head-dut {
    padding-left: 8px;
}

.head-dut::before {
    left: 1px;
}

.head-tight {
    margin-top: -1px;
}

.settings-row {
    margin-top: 11px;
    padding-left: 99px;
}

.btn {
    height: 22px;
    border: 1px solid #c6d2d5;
    background: #d8dfe1;
    font-family: Roboto, sans-serif;
    font-size: 11.500px;
    letter-spacing: -0.2px;
    color: #3f4a4e;
}

.btn-set {
    width: 75px;
    display: flex;
    align-items: center;
    gap: 2px;
    padding-left: 2px;
}

.rule {
    border: 0;
    height: 2px;
    width: 229px;
    background: #c8d8dc;
    margin: 5px 0 5px 0;
}

.rule-6 {
    margin-top: 6px;
    margin-bottom: 5px;
}

.divider {
    background: #4a7a86;
}

.measure {
    display: flex;
    flex-direction: column;
    min-width: 0;
    background: #f0f0f0;
}

.tabs {
    height: 24px;
    flex-shrink: 0;
    background: #eff0f0;
    display: flex;
    align-items: stretch;
    padding-left: 6px;
    color: #3e6a78;
    font-weight: 700;
    font-size: 12.800px;
    line-height: 24px;
    white-space: nowrap;
}

.tabs span {
    letter-spacing: -0.1px;
    margin-right: 11px;
}

.tabs span:first-child {
    margin-right: 6px;
}

.tabs .tab-on {
    background: #7db6de;
    padding: 0 5px;
    margin-right: 5px;
}

.split {
    flex: 1;
    display: grid;
    grid-template-columns: 317px 1fr;
    min-height: 0;
}

.mid {
    background: #dce6e9;
    padding-left: 3px;
    padding-top: 3px;
    overflow: hidden;
}

.btn-start {
    display: flex;
    align-items: center;
    justify-content: center;
    gap: 5px;
    width: 132px;
    height: 25px;
    margin-left: 1px;
    border: 2px solid #4a7788;
    border-radius: 2px;
    background: #bcd6e6;
    font-family: Roboto, sans-serif;
    font-size: 12px;
    color: #2f4a55;
    padding-right: 12px;
}

.play {
    border: 6px solid transparent;
    border-left: 10px solid #22485a;
    border-right: 0;
}

.checks {
    display: flex;
    align-items: center;
    height: 14px;
    margin-top: 8px;
    padding-left: 3px;
}

.cb-2 {
    margin-left: 10px;
}

.rule-mid {
    width: 308px;
    margin: 10px 0 0 3px;
    background: #c3d0d4;
}

.mr .lbl {
    width: 95px;
    margin-right: 10px;
}

.stepper {
    width: 14px;
    height: 20px;
    margin-left: 2px;
    background: #fff;
    border: 1px solid #c4cfd2;
    position: relative;
}

.stepper::before,
.stepper::after {
    content: "";
    position: absolute;
    left: 3px;
    border: 3px solid transparent;
}

.stepper::before {
    top: 1px;
    border-bottom: 4px solid #444;
    border-top: 0;
}

.stepper::after {
    bottom: 1px;
    border-top: 4px solid #444;
    border-bottom: 0;
}

.btn-edit {
    width: 64px;
    margin-left: 6px;
}

.regulate {
    height: 17px;
    margin-top: 7px;
}

.regulate .cb {
    margin-left: 105px;
}

.gear-off {
    margin-left: 13px;
    width: 18px;
    height: 17px;
    background: #c8d0d2;
    display: flex;
    align-items: center;
    justify-content: center;
}

.gear-off .ic {
    color: #8a9ea6;
}

.rule-rate {
    width: 250px;
    margin: 10px 0 0 3px;
    background: #c3d0d4;
}

.head-results {
    margin-top: 7px;
    padding-left: 9px;
}

.head-results::before {
    left: 3px;
}

.results {
    margin: 2px 0 0 0;
    width: 313px;
    background: #f0f0f0;
}

.res-tools {
    height: 24px;
    display: flex;
    align-items: center;
    gap: 5px;
    padding-left: 7px;
    background: #dde6e9;
    border: 1px solid #cdd8db;
    border-bottom: 0;
    font-size: 11.500px;
    letter-spacing: -0.1px;
}

.res-tools .tri-dark {
    margin-right: 0;
}

.tsep {
    width: 1px;
    height: 18px;
    background: #b8c6ca;
    margin-right: 3px;
}

.arrow {
    width: 22px;
    height: 11px;
    color: #2f5c6e;
    flex-shrink: 0;
}

.arrow-off {
    color: #9fb0b6;
}

.res-head {
    height: 23px;
    background: #fff;
    display: grid;
    grid-template-columns: 187px 115px;
    text-align: center;
    line-height: 22px;
    font-size: 11.500px;
    letter-spacing: -0.2px;
}

.res-row {
    height: 23px;
    display: flex;
    align-items: center;
    justify-content: space-between;
    background: #f0f0f0;
    padding-left: 6px;
    color: #3a4a80;
    font-size: 11.500px;
    letter-spacing: -0.2px;
}

.res-row-on {
    height: 24px;
    background: #a9a9a9;
}

.res-sel {
    width: 106px;
    height: 22px;
    margin-right: 19px;
    background: #e2e2e2;
    color: #444;
    display: flex;
    align-items: center;
    justify-content: space-between;
    padding-left: 4px;
}

.res-empty {
    height: 42px;
}

.rule-nest {
    width: 234px;
    margin: 4px 0 0 3px;
    background: #c3d0d4;
}

.head-nest {
    margin-top: 7px;
    padding-left: 11px;
    margin-left: 3px;
}

.nest-row {
    margin-top: 3px;
    padding-left: 6px;
}

.lbl-nest {
    width: 102px;
    color: #46565c;
    font-size: 11.500px;
    letter-spacing: -0.2px;
    white-space: nowrap;
}

/* ---------- graph column ---------- */
.right {
    display: flex;
    flex-direction: column;
    min-width: 0;
    background: #f0f0f0;
}

.graph-tools {
    height: 22px;
    flex-shrink: 0;
    background: #dce6e9;
    display: flex;
    align-items: center;
    padding-left: 4px;
    gap: 6.500px;
}

.graph-tools .gap {
    margin-left: 5px;
}

.graph-tools .tri-dark {
    margin: 0 1px 0 -5px;
}

.axis-x {
    margin-left: 4.500px;
    color: #333;
}

.axis-y {
    margin-left: -3px;
    color: #333;
}

.csel-x {
    width: 54px;
    margin: 0 0 0 -1px;
}

.csel-y {
    width: 50px;
    margin: 0 0 0 -2px;
}

.pop-end {
    margin-left: auto;
    margin-right: 8px;
}

.graph {
    position: relative;
    height: 456px;
    flex-shrink: 0;
    background: #fff;
    border-top: 0;
}

.plot {
    display: block;
    width: 803px;
    height: 456px;
}

.plot text {
    font-family: Roboto, sans-serif;
    fill: #555;
}

.plot .plot-title {
    font-family: "DejaVu Serif", serif;
    font-size: 9px;
    font-weight: 700;
    letter-spacing: 0.4px;
}

.plot .plot-time {
    font-size: 11.500px;
    letter-spacing: -0.2px;
}

.grid-h {
    stroke: #e4e4e4;
    stroke-width: 2;
    fill: none;
}

.grid-v {
    stroke: #e2e2e2;
    stroke-width: 1;
    fill: none;
}

.plot-frame {
    fill: none;
    stroke: #9a9a9a;
    stroke-width: 1.500;
}

.ticks-y text,
.ticks-x text {
    font-size: 11.500px;
    letter-spacing: -0.2px;
}

.plot .axis-title {
    font-size: 10.500px;
}

.trace {
    fill: none;
    stroke-width: 1.500;
}

.trace-b {
    stroke: #8a9dc0;
}

.trace-r {
    stroke: #e89a9a;
}

.ap-logo path {
    fill: none;
    stroke: #3d8fd0;
    stroke-width: 1.800;
}

.plot .ap-logo text {
    font-size: 11px;
    font-weight: 700;
    font-style: italic;
    fill: #2f7fc0;
}

.legend {
    position: absolute;
    left: 687px;
    top: 32px;
    width: 110px;
    height: 61px;
    background: #fff;
    border: 1px solid #5a6a72;
    border-bottom-width: 2px;
    font-size: 11.500px;
}

.legend-head {
    height: 19px;
    background: #2f7db5;
    color: #f0f6fa;
    font-weight: 700;
    text-align: center;
    line-height: 19px;
    position: relative;
    padding-right: 14px;
}

.legend-head i {
    position: absolute;
    right: 2px;
    top: -1px;
    font-style: normal;
    font-size: 9px;
    color: #b8d6ea;
}

.legend-row {
    height: 20px;
    display: flex;
    align-items: center;
    padding-left: 1px;
    color: #555;
}

.cb-sq {
    border-radius: 0;
    background: #fff;
}

.swatch {
    width: 11px;
    height: 11px;
    margin: 0 3px 0 4px;
}

.sw-blue { background: #12357f; }
.sw-red { background: #d81414; }

.strip {
    height: 25px;
    flex-shrink: 0;
    background: #dce6e9;
    border-top: 2px solid #cfd6d8;
    display: flex;
    align-items: center;
    padding: 0 0 3px 4px;
    gap: 3px;
    font-size: 12px;
    color: #3a4a50;
    letter-spacing: 0.1px;
}

.strip > .ic:nth-child(2) {
    margin-left: 5px;
}

.gap-s {
    margin-left: 6px;
}

.txt-off {
    color: #97a6ab;
}

.ic-dl {
    width: 14px;
    height: 14px;
    color: #2f5f8c;
    margin-left: auto;
    margin-right: 9px;
}

.thumbs {
    height: 75px;
    flex-shrink: 0;
    background: #fff;
    display: flex;
    gap: 35px;
    padding: 7px 0 0 21px;
}

.thumb-item {
    width: 82px;
    text-align: center;
    font-size: 11.500px;
    letter-spacing: -0.2px;
}

.mini {
    display: block;
    width: 82px;
    height: 51px;
    border: 2px solid #a9c0c8;
    border-radius: 2px;
    background: #f6f8f8;
    margin-bottom: 1px;
}

.splitter {
    height: 6px;
    flex-shrink: 0;
    background: #3f7486;
    color: #d9e5e8;
    font-size: 9px;
    line-height: 0;
    text-align: center;
}

.strip-data {
    height: 24px;
    border-top: 0;
    padding-bottom: 0;
    letter-spacing: 0.2px;
}

.strip-data .ic {
    width: 16px;
    height: 16px;
}

.strip-data .tri-dark {
    margin: 0 -1px 0 6px;
}

.gap-m {
    margin-left: 6px;
}

.gap-g {
    margin-left: 3px;
}

.ds-name {
    margin-right: 12px;
    letter-spacing: -0.1px;
}

.dchk {
    width: 12px;
    height: 12px;
    border: 1.500px solid #2f5c6e;
    border-radius: 2px;
    background: #f2f6f7;
    margin-right: 7px;
    position: relative;
    flex-shrink: 0;
}

.dchk-on {
    background: #2f5c6e;
}

.dchk-on::after {
    content: "";
    position: absolute;
    left: 2.500px;
    top: 0;
    width: 3px;
    height: 7px;
    border-right: 1.500px solid #fff;
    border-bottom: 1.500px solid #fff;
    transform: rotate(40deg);
}

.dsets {
    flex: 1;
    background: #f0f0f0;
    padding-top: 2px;
}

.ds-row {
    display: grid;
    grid-template-columns: 23px 78px 133px 534px;
    width: 768px;
    font-size: 11.500px;
    letter-spacing: -0.2px;
}

.ds-row span {
    border-right: 1px solid #dde2e4;
    padding: 0 3px;
}

.ds-head {
    height: 21px;
    background: #ebeff0;
    line-height: 23px;
    text-align: center;
    border-bottom: 2px solid #d2d8da;
}

.ds-body {
    height: 20px;
    background: #fff;
    line-height: 18px;
}

.cb-small {
    width: 12px;
    height: 12px;
    margin-top: 3px;
    background: #e8e8e8;
    border-color: #999;
    border-radius: 0;
}

.app-main .status {
    height: 21px;
    padding-left: 718px;
}
```
